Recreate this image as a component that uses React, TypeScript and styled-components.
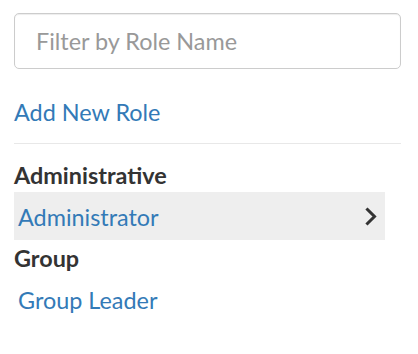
import styled, { createGlobalStyle } from "styled-components";

const GlobalStyle = createGlobalStyle`
  body {
    margin: 0;
    background: #fff;
    font-family: Lato, "Open Sans", "Liberation Sans", sans-serif;
    color: #333;
    overflow: hidden;
  }
`;

const Panel = styled.div`
  width: 387px;
  padding: 0 17px 0 14px;
  display: flex;
  flex-direction: column;
`;

const Intro = styled.p`
  margin: -27px 0 12px;
  font-size: 23.4px;
  line-height: 28px;
  color: #666;
  white-space: nowrap;
  overflow: hidden;
`;

const FilterInput = styled.input`
  box-sizing: border-box;
  width: 100%;
  height: 56px;
  margin: 0;
  padding: 0 21px;
  border: 1px solid #ccc;
  border-radius: 5px;
  box-shadow: inset 0 1px 1px rgba(0, 0, 0, 0.075);
  font-family: inherit;
  font-size: 23.4px;
  color: #333;
  outline: none;

  &::placeholder {
    color: #999;
  }
`;

const AddLink = styled.a`
  margin-top: 29px;
  font-size: 23.4px;
  line-height: 28px;
  color: #337ab7;
  text-decoration: none;
  cursor: pointer;
  align-self: flex-start;
`;

const Divider = styled.hr`
  margin: 17px 0 0;
  border: 0;
  border-top: 1px solid #e8e8e8;
  width: 100%;
`;

const Section = styled.div<{ $gap: number }>`
  margin-top: ${(p) => p.$gap}px;
`;

const GroupTitle = styled.h4`
  margin: 0;
  font-size: 23.4px;
  line-height: 28px;
  font-weight: 700;
  color: #333;
`;

const RoleList = styled.div`
  margin-top: 3px;
  display: flex;
  flex-direction: column;
`;

const RoleRow = styled.div<{ $active?: boolean }>`
  box-sizing: border-box;
  width: 371px;
  height: 48px;
  padding: 2px 8px 0 4px;
  display: flex;
  align-items: center;
  justify-content: space-between;
  background: ${(p) => (p.$active ? "#eeeeee" : "transparent")};
  cursor: pointer;
`;

const RoleName = styled.span`
  font-size: 23.4px;
  line-height: 28px;
  color: #337ab7;
`;

const Chevron = () => (
  <svg width="12" height="19" viewBox="0 0 12 19" style={{ marginTop: -2 }}>
    <polyline
      points="2.5,2.5 9.5,9.5 2.5,16.5"
      fill="none"
      stroke="#333"
      strokeWidth="3"
      strokeLinecap="square"
    />
  </svg>
);

const groups = [
  { name: "Administrative", roles: ["Administrator"], gap: 17 },
  { name: "Group", roles: ["Group Leader"], gap: 4 },
];

function App() {
  const selected = "Administrator";

  return (
    <>
      <GlobalStyle />
      <Panel>
        <Intro>Pick a role to edit it (if any)</Intro>
        <FilterInput placeholder="Filter by Role Name" />
        <AddLink>Add New Role</AddLink>
        <Divider />
        {groups.map((g) => (
          <Section key={g.name} $gap={g.gap}>
            <GroupTitle>{g.name}</GroupTitle>
            <RoleList>
              {g.roles.map((r) => (
                <RoleRow key={r} $active={r === selected}>
                  <RoleName>{r}</RoleName>
                  {r === selected && <Chevron />}
                </RoleRow>
              ))}
            </RoleList>
          </Section>
        ))}
      </Panel>
    </>
  );
}

export default App;
